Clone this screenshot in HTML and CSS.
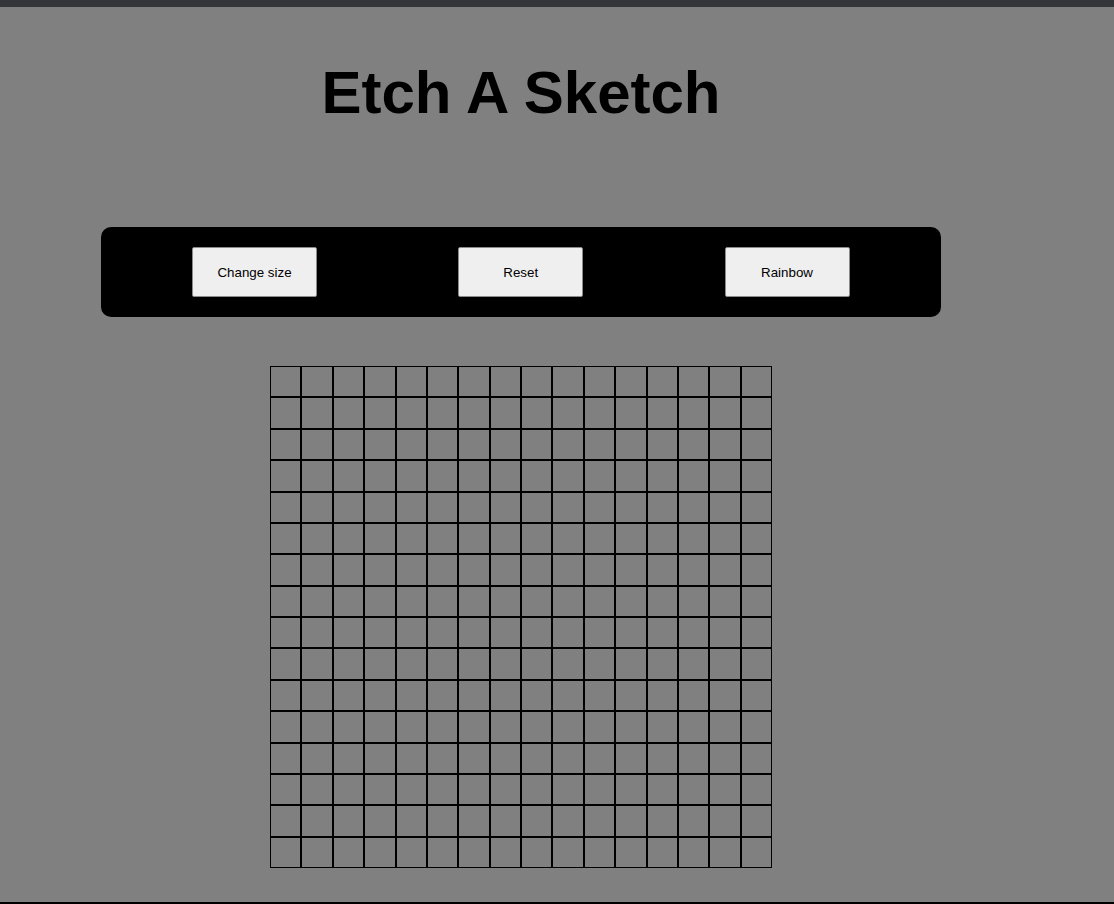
FILE: index.html
```html
<!DOCTYPE html>
<html lang="en">
<head>
<meta charset="utf-8">
<title>Etch A Sketch</title>
<link rel="stylesheet" href="styles.css">
</head>
<body>
<div class="topbar"></div>
<main class="app">
  <h1 class="title">Etch A Sketch</h1>
  <div class="controls">
    <button class="btn">Change size</button>
    <button class="btn">Reset</button>
    <button class="btn">Rainbow</button>
  </div>
  <div class="grid">
    <div class="cell"></div><div class="cell"></div><div class="cell"></div><div class="cell"></div><div class="cell"></div><div class="cell"></div><div class="cell"></div><div class="cell"></div><div class="cell"></div><div class="cell"></div><div class="cell"></div><div class="cell"></div><div class="cell"></div><div class="cell"></div><div class="cell"></div><div class="cell"></div>
    <div class="cell"></div><div class="cell"></div><div class="cell"></div><div class="cell"></div><div class="cell"></div><div class="cell"></div><div class="cell"></div><div class="cell"></div><div class="cell"></div><div class="cell"></div><div class="cell"></div><div class="cell"></div><div class="cell"></div><div class="cell"></div><div class="cell"></div><div class="cell"></div>
    <div class="cell"></div><div class="cell"></div><div class="cell"></div><div class="cell"></div><div class="cell"></div><div class="cell"></div><div class="cell"></div><div class="cell"></div><div class="cell"></div><div class="cell"></div><div class="cell"></div><div class="cell"></div><div class="cell"></div><div class="cell"></div><div class="cell"></div><div class="cell"></div>
    <div class="cell"></div><div class="cell"></div><div class="cell"></div><div class="cell"></div><div class="cell"></div><div class="cell"></div><div class="cell"></div><div class="cell"></div><div class="cell"></div><div class="cell"></div><div class="cell"></div><div class="cell"></div><div class="cell"></div><div class="cell"></div><div class="cell"></div><div class="cell"></div>
    <div class="cell"></div><div class="cell"></div><div class="cell"></div><div class="cell"></div><div class="cell"></div><div class="cell"></div><div class="cell"></div><div class="cell"></div><div class="cell"></div><div class="cell"></div><div class="cell"></div><div class="cell"></div><div class="cell"></div><div class="cell"></div><div class="cell"></div><div class="cell"></div>
    <div class="cell"></div><div class="cell"></div><div class="cell"></div><div class="cell"></div><div class="cell"></div><div class="cell"></div><div class="cell"></div><div class="cell"></div><div class="cell"></div><div class="cell"></div><div class="cell"></div><div class="cell"></div><div class="cell"></div><div class="cell"></div><div class="cell"></div><div class="cell"></div>
    <div class="cell"></div><div class="cell"></div><div class="cell"></div><div class="cell"></div><div class="cell"></div><div class="cell"></div><div class="cell"></div><div class="cell"></div><div class="cell"></div><div class="cell"></div><div class="cell"></div><div class="cell"></div><div class="cell"></div><div class="cell"></div><div class="cell"></div><div class="cell"></div>
    <div class="cell"></div><div class="cell"></div><div class="cell"></div><div class="cell"></div><div class="cell"></div><div class="cell"></div><div class="cell"></div><div class="cell"></div><div class="cell"></div><div class="cell"></div><div class="cell"></div><div class="cell"></div><div class="cell"></div><div class="cell"></div><div class="cell"></div><div class="cell"></div>
    <div class="cell"></div><div class="cell"></div><div class="cell"></div><div class="cell"></div><div class="cell"></div><div class="cell"></div><div class="cell"></div><div class="cell"></div><div class="cell"></div><div class="cell"></div><div class="cell"></div><div class="cell"></div><div class="cell"></div><div class="cell"></div><div class="cell"></div><div class="cell"></div>
    <div class="cell"></div><div class="cell"></div><div class="cell"></div><div class="cell"></div><div class="cell"></div><div class="cell"></div><div class="cell"></div><div class="cell"></div><div class="cell"></div><div class="cell"></div><div class="cell"></div><div class="cell"></div><div class="cell"></div><div class="cell"></div><div class="cell"></div><div class="cell"></div>
    <div class="cell"></div><div class="cell"></div><div class="cell"></div><div class="cell"></div><div class="cell"></div><div class="cell"></div><div class="cell"></div><div class="cell"></div><div class="cell"></div><div class="cell"></div><div class="cell"></div><div class="cell"></div><div class="cell"></div><div class="cell"></div><div class="cell"></div><div class="cell"></div>
    <div class="cell"></div><div class="cell"></div><div class="cell"></div><div class="cell"></div><div class="cell"></div><div class="cell"></div><div class="cell"></div><div class="cell"></div><div class="cell"></div><div class="cell"></div><div class="cell"></div><div class="cell"></div><div class="cell"></div><div class="cell"></div><div class="cell"></div><div class="cell"></div>
    <div class="cell"></div><div class="cell"></div><div class="cell"></div><div class="cell"></div><div class="cell"></div><div class="cell"></div><div class="cell"></div><div class="cell"></div><div class="cell"></div><div class="cell"></div><div class="cell"></div><div class="cell"></div><div class="cell"></div><div class="cell"></div><div class="cell"></div><div class="cell"></div>
    <div class="cell"></div><div class="cell"></div><div class="cell"></div><div class="cell"></div><div class="cell"></div><div class="cell"></div><div class="cell"></div><div class="cell"></div><div class="cell"></div><div class="cell"></div><div class="cell"></div><div class="cell"></div><div class="cell"></div><div class="cell"></div><div class="cell"></div><div class="cell"></div>
    <div class="cell"></div><div class="cell"></div><div class="cell"></div><div class="cell"></div><div class="cell"></div><div class="cell"></div><div class="cell"></div><div class="cell"></div><div class="cell"></div><div class="cell"></div><div class="cell"></div><div class="cell"></div><div class="cell"></div><div class="cell"></div><div class="cell"></div><div class="cell"></div>
    <div class="cell"></div><div class="cell"></div><div class="cell"></div><div class="cell"></div><div class="cell"></div><div class="cell"></div><div class="cell"></div><div class="cell"></div><div class="cell"></div><div class="cell"></div><div class="cell"></div><div class="cell"></div><div class="cell"></div><div class="cell"></div><div class="cell"></div><div class="cell"></div>
  </div>
</main>
<div class="bottomline"></div>
</body>
</html>
```

FILE: styles.css
```css
html, body {
  margin: 0;
  padding: 0;
}

body {
  background: #808080;
  font-family: "Liberation Sans", Arial, sans-serif;
  min-height: 904px;
  display: flex;
  flex-direction: column;
}

.topbar {
  height: 7px;
  background: #35363a;
  flex: none;
}

.app {
  width: 840px;
  margin-left: 101px;
  display: flex;
  flex-direction: column;
  align-items: center;
  flex: 1;
}

.title {
  margin: 51px 0 0;
  font-size: 60px;
  font-weight: bold;
  color: #000;
  line-height: normal;
  text-align: center;
}

.controls {
  margin-top: 100px;
  align-self: stretch;
  box-sizing: border-box;
  height: 90px;
  padding: 20px 0 20px 91px;
  background: #000;
  border-radius: 10px;
  display: flex;
  justify-content: flex-start;
  align-items: flex-start;
  gap: 141.25px;
}

.btn {
  width: 125px;
  height: 50px;
  background: #efefef;
  border: 1px solid #8a8a8a;
  border-radius: 2px;
  font-family: "Liberation Sans", Arial, sans-serif;
  font-size: 13.333px;
  color: #000;
  padding: 0;
  margin: 0;
}

.grid {
  margin-top: 49px;
  width: 502px;
  height: 502px;
  display: grid;
  grid-template-columns: repeat(16, 1fr);
  grid-template-rows: repeat(16, 1fr);
}

.cell {
  border: 1px solid #000;
  box-sizing: border-box;
}

.bottomline {
  height: 2px;
  background: #000;
  flex: none;
}
```
